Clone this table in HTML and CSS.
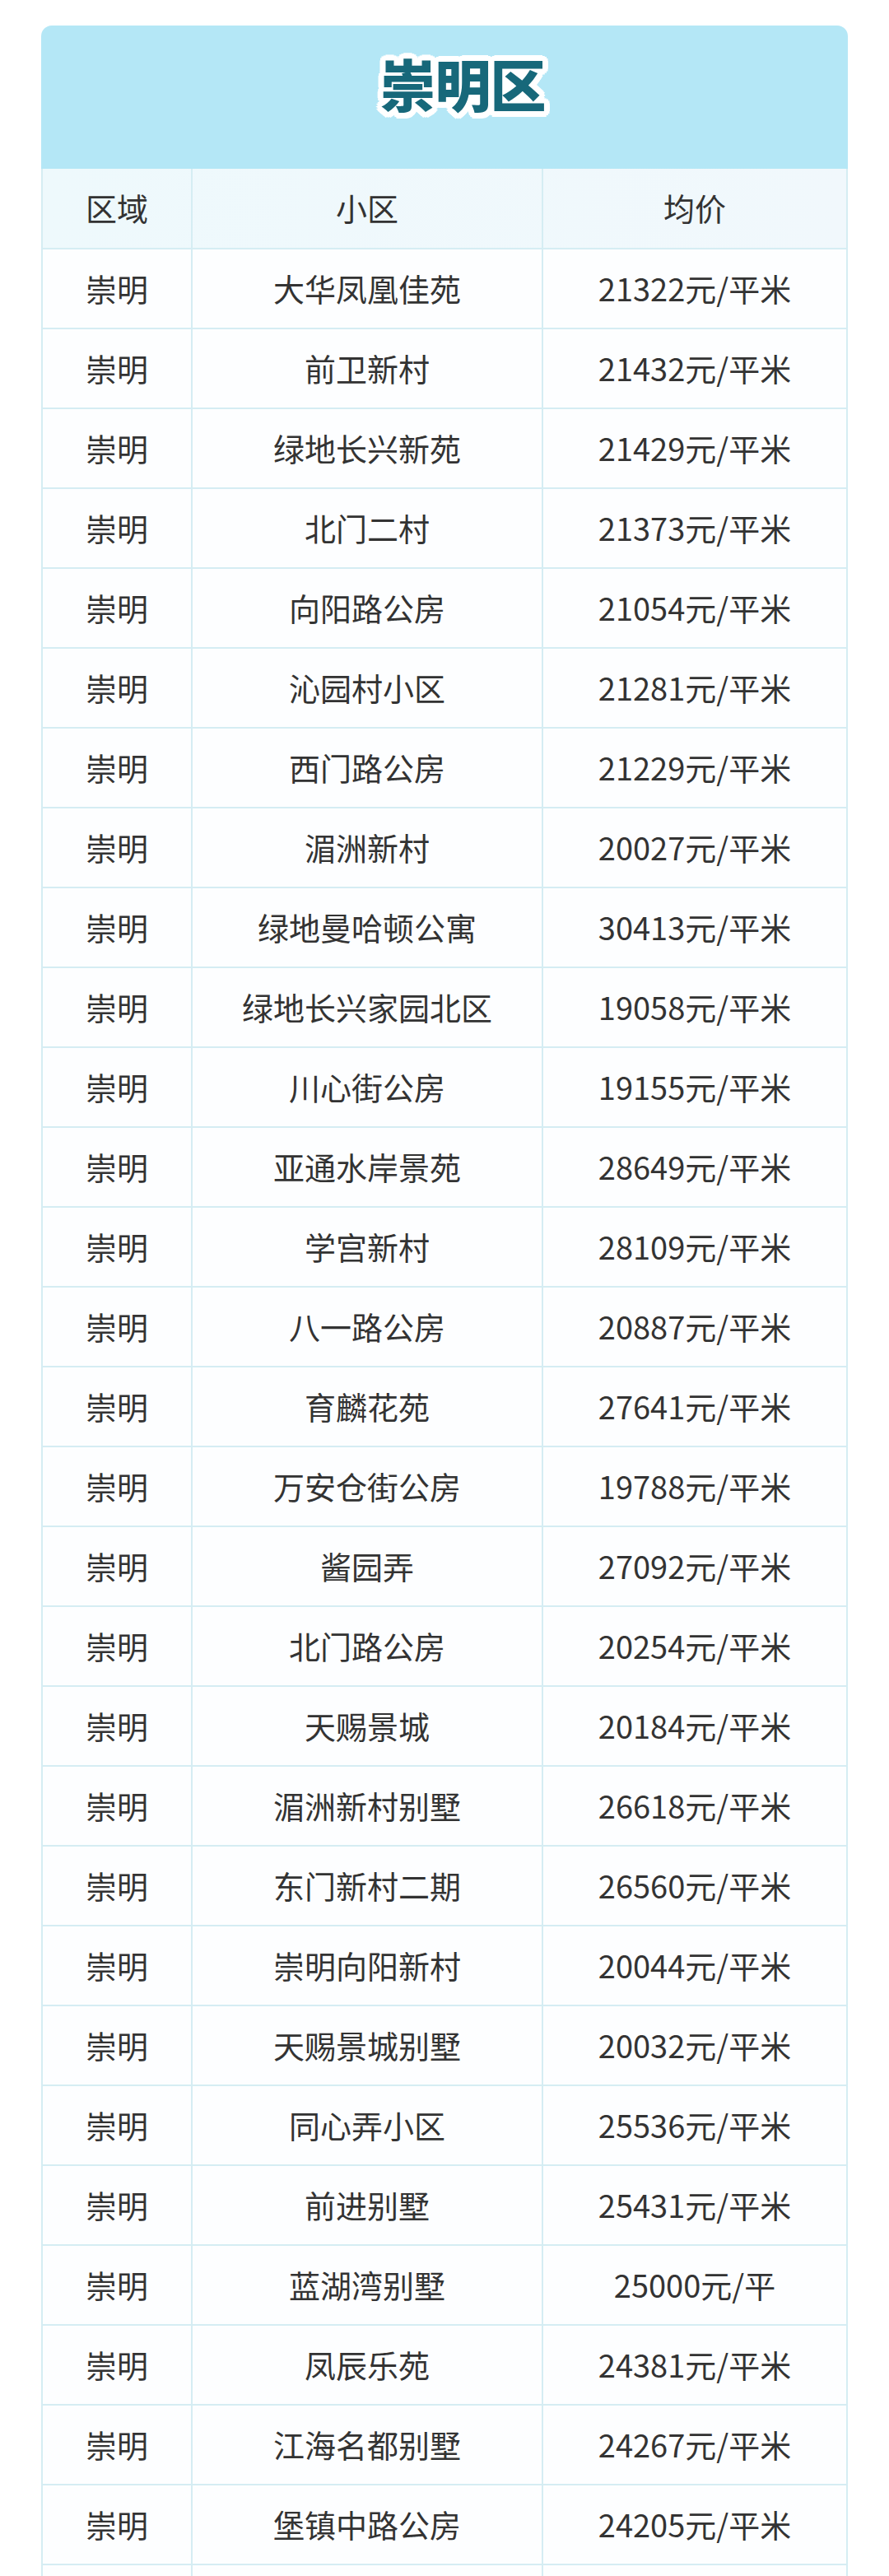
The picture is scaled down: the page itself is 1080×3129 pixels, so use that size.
FILE: index.html
```html
<!DOCTYPE html>
<html lang="zh-CN">
<head>
<meta charset="utf-8">
<title>崇明区</title>
<link rel="stylesheet" href="styles.css">
</head>
<body>
<div class="card">
  <div class="title-bar"><h1 class="title">崇明区</h1></div>
  <div class="table">
    <div class="row head"><div class="cell">区域</div><div class="cell">小区</div><div class="cell">均价</div></div>
    <div class="row"><div class="cell">崇明</div><div class="cell">大华凤凰佳苑</div><div class="cell">21322元/平米</div></div>
    <div class="row"><div class="cell">崇明</div><div class="cell">前卫新村</div><div class="cell">21432元/平米</div></div>
    <div class="row"><div class="cell">崇明</div><div class="cell">绿地长兴新苑</div><div class="cell">21429元/平米</div></div>
    <div class="row"><div class="cell">崇明</div><div class="cell">北门二村</div><div class="cell">21373元/平米</div></div>
    <div class="row"><div class="cell">崇明</div><div class="cell">向阳路公房</div><div class="cell">21054元/平米</div></div>
    <div class="row"><div class="cell">崇明</div><div class="cell">沁园村小区</div><div class="cell">21281元/平米</div></div>
    <div class="row"><div class="cell">崇明</div><div class="cell">西门路公房</div><div class="cell">21229元/平米</div></div>
    <div class="row"><div class="cell">崇明</div><div class="cell">湄洲新村</div><div class="cell">20027元/平米</div></div>
    <div class="row"><div class="cell">崇明</div><div class="cell">绿地曼哈顿公寓</div><div class="cell">30413元/平米</div></div>
    <div class="row"><div class="cell">崇明</div><div class="cell">绿地长兴家园北区</div><div class="cell">19058元/平米</div></div>
    <div class="row"><div class="cell">崇明</div><div class="cell">川心街公房</div><div class="cell">19155元/平米</div></div>
    <div class="row"><div class="cell">崇明</div><div class="cell">亚通水岸景苑</div><div class="cell">28649元/平米</div></div>
    <div class="row"><div class="cell">崇明</div><div class="cell">学宫新村</div><div class="cell">28109元/平米</div></div>
    <div class="row"><div class="cell">崇明</div><div class="cell">八一路公房</div><div class="cell">20887元/平米</div></div>
    <div class="row"><div class="cell">崇明</div><div class="cell">育麟花苑</div><div class="cell">27641元/平米</div></div>
    <div class="row"><div class="cell">崇明</div><div class="cell">万安仓街公房</div><div class="cell">19788元/平米</div></div>
    <div class="row"><div class="cell">崇明</div><div class="cell">酱园弄</div><div class="cell">27092元/平米</div></div>
    <div class="row"><div class="cell">崇明</div><div class="cell">北门路公房</div><div class="cell">20254元/平米</div></div>
    <div class="row"><div class="cell">崇明</div><div class="cell">天赐景城</div><div class="cell">20184元/平米</div></div>
    <div class="row"><div class="cell">崇明</div><div class="cell">湄洲新村别墅</div><div class="cell">26618元/平米</div></div>
    <div class="row"><div class="cell">崇明</div><div class="cell">东门新村二期</div><div class="cell">26560元/平米</div></div>
    <div class="row"><div class="cell">崇明</div><div class="cell">崇明向阳新村</div><div class="cell">20044元/平米</div></div>
    <div class="row"><div class="cell">崇明</div><div class="cell">天赐景城别墅</div><div class="cell">20032元/平米</div></div>
    <div class="row"><div class="cell">崇明</div><div class="cell">同心弄小区</div><div class="cell">25536元/平米</div></div>
    <div class="row"><div class="cell">崇明</div><div class="cell">前进别墅</div><div class="cell">25431元/平米</div></div>
    <div class="row"><div class="cell">崇明</div><div class="cell">蓝湖湾别墅</div><div class="cell">25000元/平</div></div>
    <div class="row"><div class="cell">崇明</div><div class="cell">凤辰乐苑</div><div class="cell">24381元/平米</div></div>
    <div class="row"><div class="cell">崇明</div><div class="cell">江海名都别墅</div><div class="cell">24267元/平米</div></div>
    <div class="row"><div class="cell">崇明</div><div class="cell">堡镇中路公房</div><div class="cell">24205元/平米</div></div>
    <div class="row"><div class="cell"></div><div class="cell"></div><div class="cell"></div></div>
  </div>
</div>
</body>
</html>
```
FILE: styles.css
```css
* { box-sizing: border-box; }
html, body {
  margin: 0;
  padding: 0;
  background: #ffffff;
}
body {
  font-family: "Noto Sans CJK SC", "Noto Sans", sans-serif;
  color: #333333;
}
.card {
  margin: 31px 0 0 50px;
  width: 980px;
  border-radius: 13px 13px 0 0;
  overflow: hidden;
}
.title-bar {
  height: 174px;
  background: #b4e7f6;
  display: flex;
  justify-content: center;
  padding-top: 36px;
  padding-left: 44px;
}
.title {
  margin: 0;
  font-size: 68px;
  line-height: 1;
  font-weight: 900;
  color: #17687a;
  letter-spacing: -1px;
  text-shadow:
    7px 0 0 #fff, -7px 0 0 #fff, 0 7px 0 #fff, 0 -7px 0 #fff,
    5px 5px 0 #fff, -5px 5px 0 #fff, 5px -5px 0 #fff, -5px -5px 0 #fff,
    6.5px 2.7px 0 #fff, -6.5px 2.7px 0 #fff, 6.5px -2.7px 0 #fff, -6.5px -2.7px 0 #fff,
    2.7px 6.5px 0 #fff, -2.7px 6.5px 0 #fff, 2.7px -6.5px 0 #fff, -2.7px -6.5px 0 #fff,
    4px 0 0 #fff, -4px 0 0 #fff, 0 4px 0 #fff, 0 -4px 0 #fff;
}
.table {
  border-left: 2px solid #d5edf3;
  border-right: 2px solid #d5edf3;
}
.row {
  display: grid;
  grid-template-columns: 182px 426px 1fr;
  height: 97px;
  border-bottom: 2px solid #d5edf3;
  background: #fdfeff;
}
.row.head {
  height: 98px;
  background: linear-gradient(90deg, #eef9fc, #f1f8fc);
}
.cell {
  display: flex;
  align-items: center;
  justify-content: center;
  font-size: 38px;
  line-height: 1;
  white-space: nowrap;
  border-right: 2px solid #d5edf3;
  padding-bottom: 2px;
}
.cell:last-child {
  border-right: none;
}
```
